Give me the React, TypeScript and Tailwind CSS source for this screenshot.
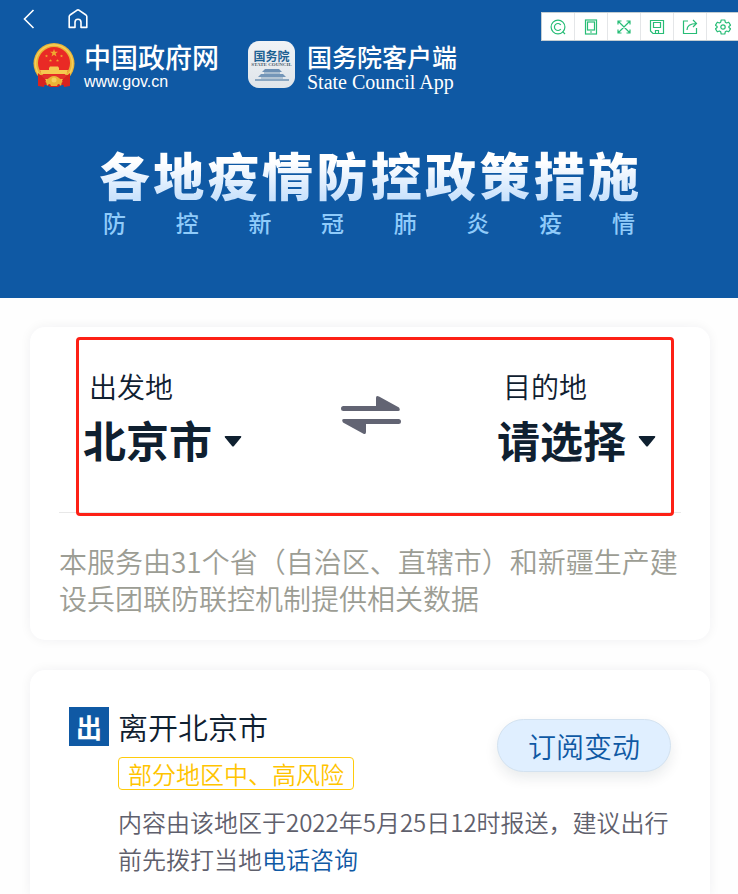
import type { ReactNode } from 'react';

const places = ['北京市', '上海市', '天津市', '重庆市'];

function BackIcon() {
  return (
    <svg width="12" height="20" viewBox="0 0 12 20" fill="none" stroke="currentColor" strokeWidth="1.6">
      <path d="M10.5 1 L1.5 10 L10.5 19" />
    </svg>
  );
}

function HomeIcon() {
  return (
    <svg width="20" height="20" viewBox="0 0 20 20" fill="none" stroke="currentColor" strokeWidth="1.6" strokeLinejoin="round">
      <path d="M1.2 7.6 C1.2 6.9 1.5 6.4 2 6 L8.8 1.3 C9.6 .8 10.4 .8 11.2 1.3 L18 6 C18.5 6.4 18.8 6.9 18.8 7.6 V18.4 H13 V13.2 C13 9.2 7 9.2 7 13.2 V18.4 H1.2 Z" />
    </svg>
  );
}

function Emblem() {
  const star = 'M0 -4 L1 -1.2 L4 -1.2 L1.6 .5 L2.5 3.4 L0 1.7 L-2.5 3.4 L-1.6 .5 L-4 -1.2 L-1 -1.2 Z';
  return (
    <svg width="42" height="46" viewBox="0 0 42 46" aria-hidden="true">
      <path d="M5 28 L5 43 Q13 40 17 44 H25 Q29 40 37 43 L37 28 Z" fill="#d8231f" />
      <circle cx="21" cy="20.500" r="20.500" fill="#e9b436" />
      <circle cx="21" cy="20.500" r="18.500" fill="none" stroke="#f5cf5a" strokeWidth="1.500" />
      <circle cx="21" cy="20" r="16" fill="#e92a25" />
      <g fill="#f0a830">
        <path d={star} transform="translate(21 10)" />
        <path d={star} transform="translate(13.500 13) scale(.4)" />
        <path d={star} transform="translate(28.500 13) scale(.4)" />
        <path d={star} transform="translate(17.500 17.500) scale(.4)" />
        <path d={star} transform="translate(24.500 17.500) scale(.4)" />
      </g>
      <path d="M16 25 L17 23.500 H25 L26 25 V27 H35 L33.500 31 H8.500 L7 27 H16 Z" fill="#f5c950" />
      <path d="M6 32 H36 L33 36 H9 Z" fill="#e3322a" />
      <path d="M5 30 L13 37 L11 44 L5 43 Z M37 30 L29 37 L31 44 L37 43 Z" fill="#d8231f" />
      <path d="M13 38 Q17 33 21 33 Q25 33 29 38 L28 43 Q25 39 24 43 H18 Q17 39 14 43 Z" fill="#e9b436" />
      <circle cx="21" cy="37" r="2.500" fill="#f5cf5a" />
    </svg>
  );
}

function AppBadge() {
  return (
    <div className="mt-px flex h-[47px] w-[47px] flex-col items-center overflow-hidden rounded-[11px] bg-gradient-to-b from-[#f1f3f6] to-[#dfe5ea] pt-[8px]">
      <span className="text-[12px] leading-[13px] font-bold text-[#1d6192]">国务院</span>
      <span className="font-['Liberation_Serif',serif] text-[5px] leading-[5px] font-bold whitespace-nowrap text-[#4d5c6a]">STATE COUNCIL</span>
      <svg width="36" height="15" viewBox="0 0 36 15" aria-hidden="true">
        <path d="M11 2 H25 L28 5 H8 Z" fill="#6c8fb3" />
        <path d="M10 5 H26 V7 H10 Z" fill="#a8bdd0" />
        <path d="M7 7 H29 L32 10 H4 Z" fill="#7496b8" />
        <path d="M7 10 H29 V12 H7 Z" fill="#b4c5d4" />
        <path d="M1 12 H35 V14 H1 Z" fill="#8ba7c1" />
      </svg>
    </div>
  );
}

const tools: { name: string; icon: ReactNode }[] = [
  {
    name: '识图',
    icon: (
      <>
        <circle cx="8" cy="8" r="6.900" />
        <path d="M10.800 6 A3.500 3.500 0 1 0 10.800 10" />
        <path d="M12.600 12.600 L15 15" />
      </>
    ),
  },
  {
    name: '手机',
    icon: (
      <>
        <rect x="2.500" y="1" width="11" height="14" />
        <rect x="4.500" y="3" width="7" height="8" />
        <path d="M7 13 H9" />
      </>
    ),
  },
  {
    name: '全屏',
    icon: <path d="M2 2 L14 14 M14 2 L2 14 M2 5.500 V2 H5.500 M10.500 2 H14 V5.500 M14 10.500 V14 H10.500 M5.500 14 H2 V10.500" />,
  },
  {
    name: '保存',
    icon: (
      <>
        <path d="M1.500 1.500 H14.500 V14.500 H4 L1.500 12 Z" />
        <path d="M4.500 3.500 H11.500 V8.500 H4.500 Z M6.500 14.500 V11.500 H9.500 V14.500" />
      </>
    ),
  },
  {
    name: '分享',
    icon: (
      <>
        <path d="M6 2 H1.500 V14.500 H14.500 V9" />
        <path d="M5 11 C5 7 8 4.500 14.500 4.500 M11 1 L14.500 4.500 L11 8" />
      </>
    ),
  },
  {
    name: '设置',
    icon: (
      <>
        <path d="M6.200 1 H9.800 L10.300 3.200 L11.600 4 L13.700 3.200 L15.500 6.200 L13.900 7.500 V8.500 L15.500 9.800 L13.700 12.800 L11.600 12 L10.300 12.800 L9.800 15 H6.200 L5.700 12.800 L4.400 12 L2.300 12.800 L.5 9.800 L2.100 8.500 V7.500 L.5 6.200 L2.300 3.200 L4.400 4 L5.700 3.200 Z" strokeLinejoin="round" />
        <circle cx="8" cy="8" r="2.200" />
      </>
    ),
  },
];

function Toolbar() {
  return (
    <div className="absolute top-3 right-0 flex h-[29px] border-y border-l border-[#c3cdd2] bg-white">
      {tools.map((tool) => (
        <button key={tool.name} type="button" aria-label={tool.name} className="flex w-[33px] items-center justify-center border-r border-[#e4e6e8] last:w-[31px] last:border-r-0">
          <svg width="16" height="16" viewBox="0 0 16 16" fill="none" stroke="#27bd76" strokeWidth="1.200">
            {tool.icon}
          </svg>
        </button>
      ))}
    </div>
  );
}

function PlaceSelect({ id, label, options }: { id: string; label: string; options: string[] }) {
  return (
    <div className="flex flex-col">
      <label htmlFor={id} className="pl-[6px] text-[28px] leading-[40px] font-[350]">
        {label}
      </label>
      <div className="relative">
        <select id={id} className="h-[66px] w-[162px] appearance-none bg-transparent text-[43px] leading-[66px] font-bold">
          {options.map((option) => (
            <option key={option}>{option}</option>
          ))}
        </select>
        <svg className="pointer-events-none absolute top-[30px] right-[3px]" width="18" height="11" viewBox="0 0 18 11" aria-hidden="true">
          <path d="M1.500 0 H16.500 Q18 0 17 1.500 L10 10 Q9 11 8 10 L1 1.500 Q0 0 1.500 0 Z" fill="#0f2030" />
        </svg>
      </div>
    </div>
  );
}

function SwapIcon() {
  return (
    <svg width="60" height="38" viewBox="0 0 60 38" aria-hidden="true" fill="#626473">
      <path d="M2.500 10 H35 V2 Q35 -1 38 .6 L58 11.500 Q60 15 57 15 H2.500 Q0 15 0 12.500 Q0 10 2.500 10 Z" />
      <path d="M57.500 28 H25 V36 Q25 39 22 37.400 L2 26.500 Q0 23 3 23 H57.500 Q60 23 60 25.500 Q60 28 57.500 28 Z" />
    </svg>
  );
}

export default function App() {
  return (
    <div className="min-h-screen bg-[#fefefe] font-['Noto_Sans_CJK_SC',sans-serif] text-[#0f2030]">
      <header className="relative h-[298px] bg-[#0f59a4] text-white">
        <nav className="flex h-[40px] items-center gap-[33px] pb-[2px] pl-[23px]">
          <button type="button" aria-label="返回">
            <BackIcon />
          </button>
          <button type="button" aria-label="首页">
            <HomeIcon />
          </button>
        </nav>
        <Toolbar />

        <div className="flex items-start pl-[33px]">
          <div className="pt-[3px]">
            <Emblem />
          </div>
          <a href="#gov" className="ml-[9px] w-[164px]">
            <span className="block text-[27px] leading-[34px] font-medium">中国政府网</span>
            <span className="block font-['Liberation_Sans',Arial,sans-serif] text-[16px] leading-[16px]">www.gov.cn</span>
          </a>
          <AppBadge />
          <a href="#app" className="ml-[12px]">
            <span className="block text-[25px] leading-[32px] font-medium">国务院客户端</span>
            <span className="block font-['Liberation_Serif',serif] text-[20px] leading-[20px]">State Council App</span>
          </a>
        </div>

        <div className="px-[99px] pt-[52px]">
          <h1 className="flex justify-between text-[51px] leading-[60px] font-black">
            {[...'各地疫情防控政策措施'].map((char) => (
              <span key={char} className="bg-gradient-to-b from-white from-30% to-[#c9e2fc] to-90% bg-clip-text text-transparent">
                {char}
              </span>
            ))}
          </h1>
          <p className="flex justify-between px-[4px] text-[23px] leading-[36px] font-medium text-[#8fcbfa]">
            {[...'防控新冠肺炎疫情'].map((char) => (
              <span key={char}>{char}</span>
            ))}
          </p>
        </div>
      </header>

      <main className="flex flex-col gap-[30px] pt-[29px] pr-[28px] pl-[30px]">
        <section className="relative rounded-[15px] bg-white px-[29px] pb-[23px] shadow-[0_0_12px_rgba(15,32,48,0.06)]">
          <div className="flex items-start justify-between border-b border-[#e8e8e8] pt-[39px] pr-[22px] pb-[40px] pl-[24px]">
            <PlaceSelect id="from" label="出发地" options={places} />
            <button type="button" aria-label="交换出发地和目的地" className="pt-[30px]">
              <SwapIcon />
            </button>
            <PlaceSelect id="to" label="目的地" options={['请选择', ...places]} />
          </div>
          <p className="pt-[30px] text-[28px] leading-[37px] font-[350] text-[#9c9d94]">
            本服务由31个省（自治区、直辖市）和新疆生产建设兵团联防联控机制提供相关数据
          </p>
          <div className="pointer-events-none absolute top-[10px] right-[36px] left-[46px] h-[179px] rounded-[4px] border-3 border-[#fd2015]" />
        </section>

        <section className="flex items-start rounded-t-[15px] bg-white px-[39px] pt-[37px] pb-[20px] shadow-[0_0_12px_rgba(15,32,48,0.06)]">
          <span className="flex h-[39px] w-[40px] items-center justify-center bg-[#0f59a4] text-[26px] font-bold text-white">出</span>
          <div className="ml-[9px] min-w-0 flex-1">
            <div className="flex items-start justify-between">
              <div>
                <h2 className="text-[30px] leading-[38px] font-[350]">离开北京市</h2>
                <p className="mt-[12px] rounded-[4px] border border-[#ffcb0b] px-[9px] text-[24px] leading-[31px] font-[350] text-[#ffc400]">
                  部分地区中、高风险
                </p>
              </div>
              <button type="button" className="mt-[12px] h-[53px] w-[174px] rounded-full border border-[#d3e2f0] bg-[#e0efff] text-[28px] leading-[50px] font-[350] text-[#0f59a4] shadow-[0_6px_14px_rgba(15,32,48,0.09)]">
                订阅变动
              </button>
            </div>
            <p className="mt-[13px] text-[24px] leading-[37px] font-[350] text-[#5f606c]">
              内容由该地区于2022年5月25日12时报送，建议出行前先拨打当地
              <a href="#tel" className="text-[#0f59a4]">电话咨询</a>
            </p>
          </div>
        </section>
      </main>
    </div>
  );
}
